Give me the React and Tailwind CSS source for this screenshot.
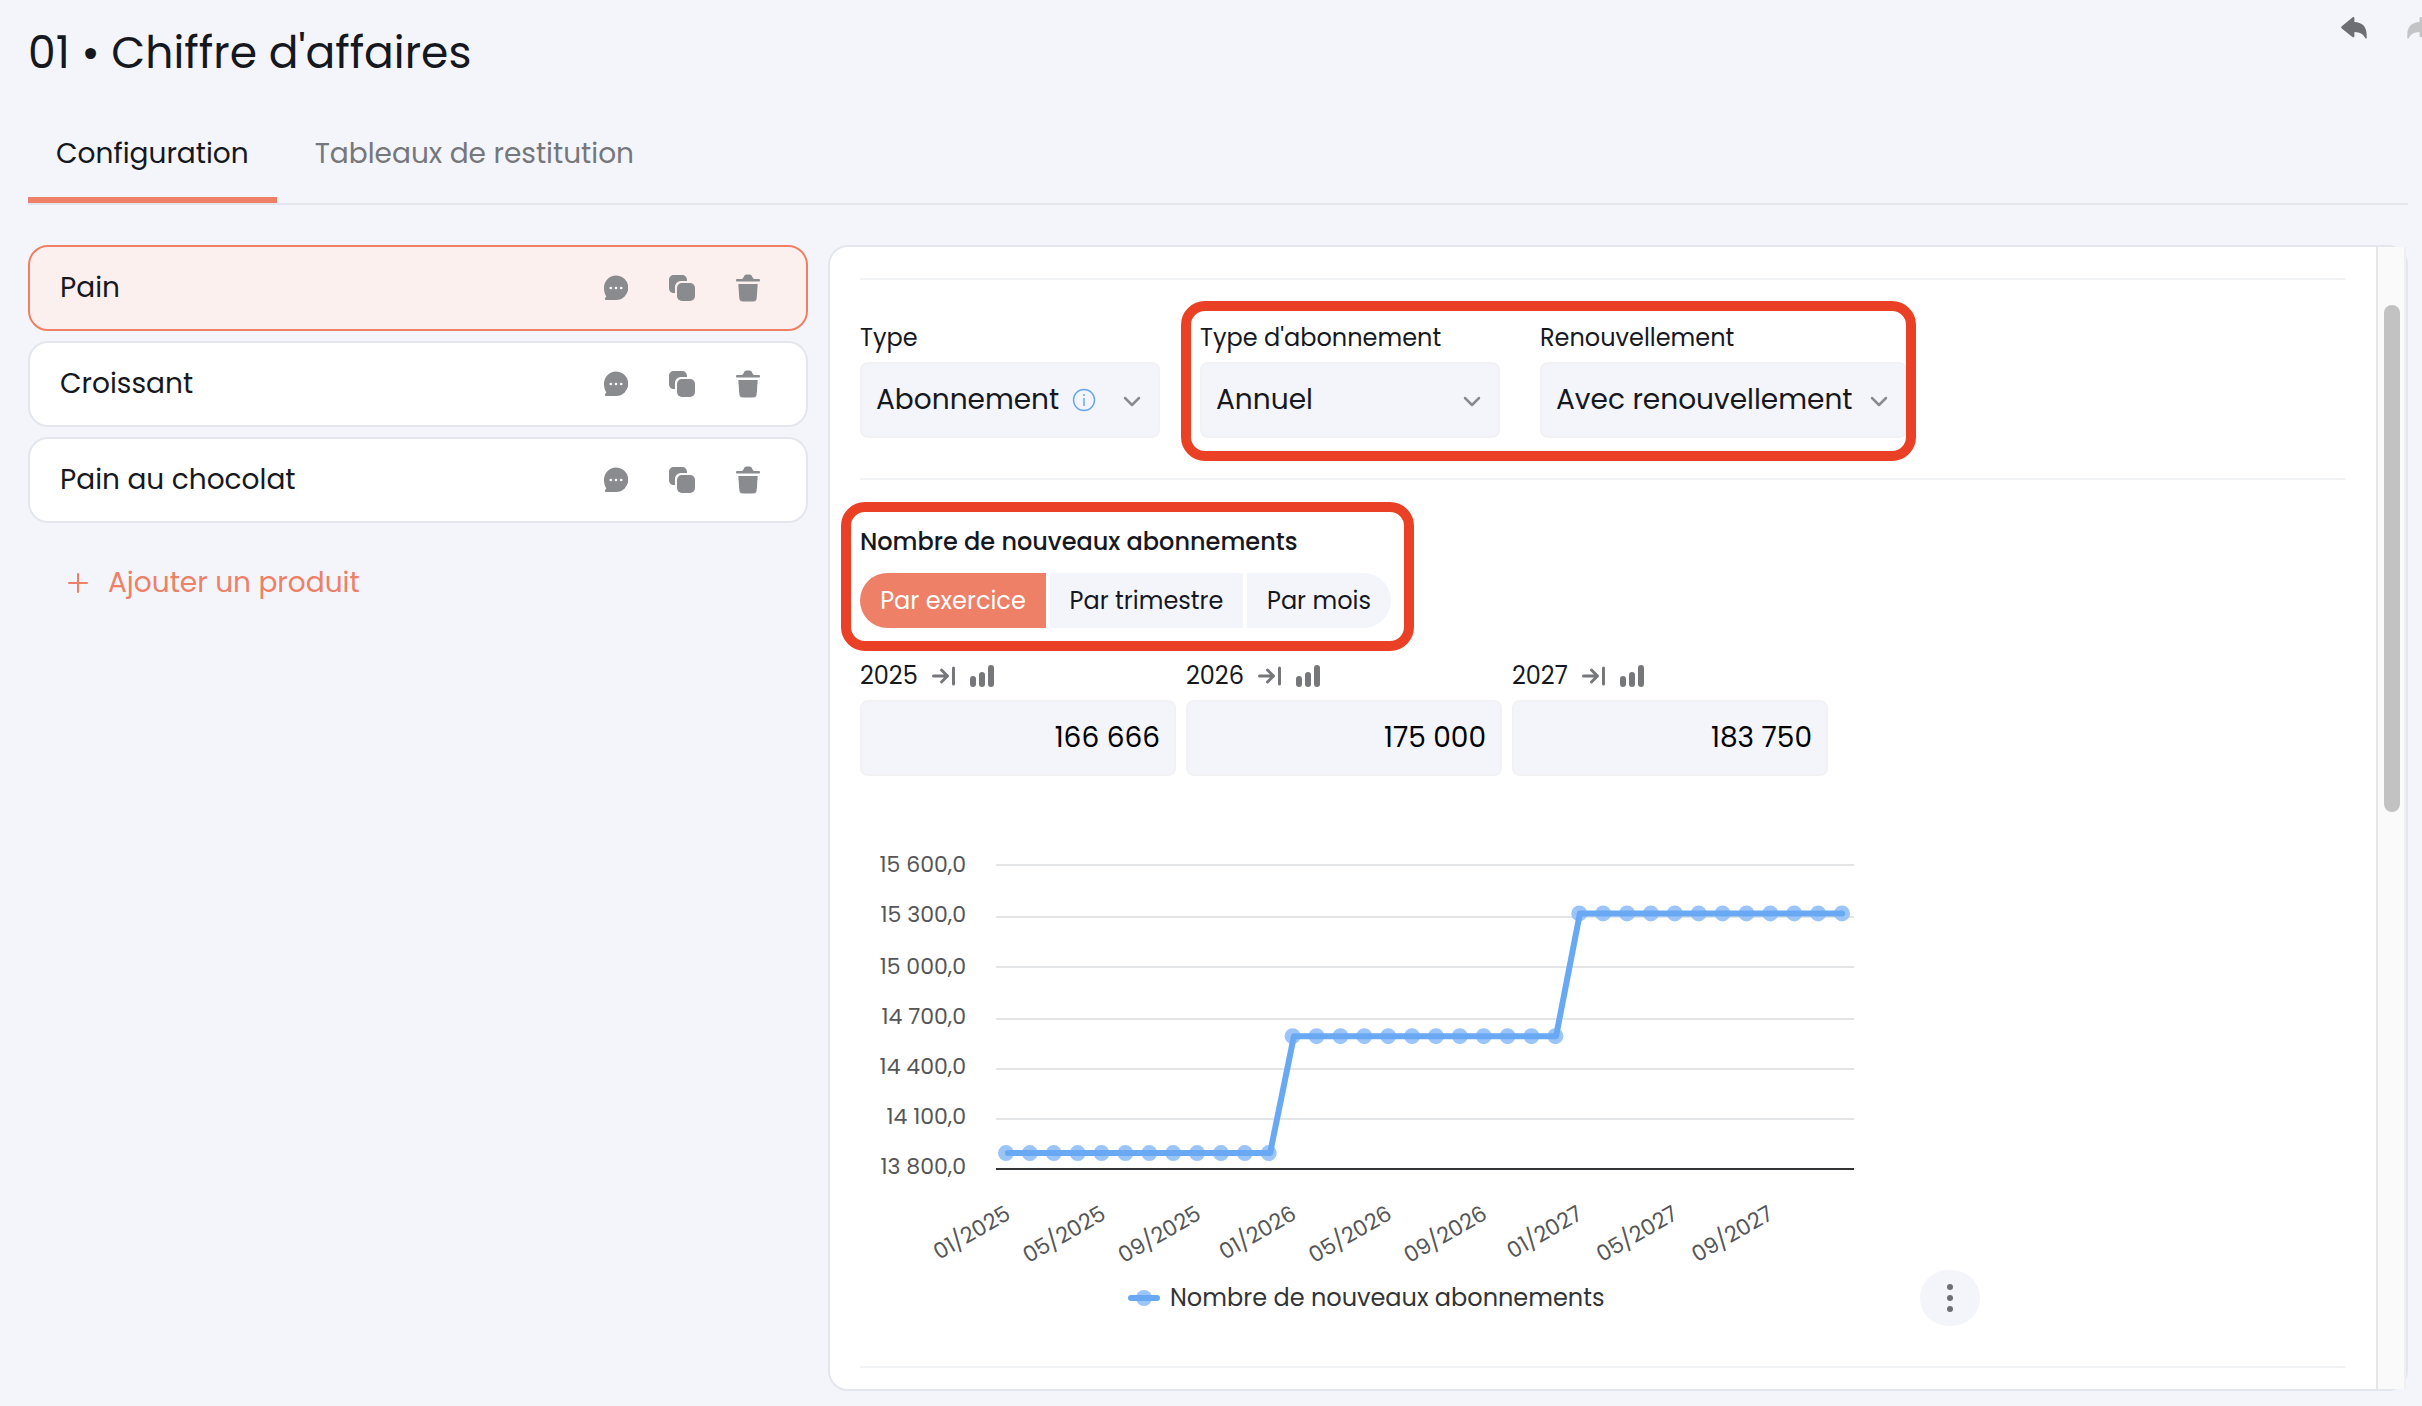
import React, { useState } from 'react';

const products = ['Pain', 'Croissant', 'Pain au chocolat'];

const tabs = [
    { id: 'config', label: 'Configuration' },
    { id: 'tables', label: 'Tableaux de restitution' },
];

const periods = [
    { id: 'year', label: 'Par exercice', className: 'w-[186px] rounded-l-full' },
    { id: 'quarter', label: 'Par trimestre', className: 'w-[193px]' },
    { id: 'month', label: 'Par mois', className: 'w-[144px] rounded-r-full' },
];

const initialValues = { 2025: '166 666', 2026: '175 000', 2027: '183 750' };

/* Icons */

const UndoIcon = ({ className }) => (
    <svg className={className} width="26" height="22" viewBox="0 0 26 22" fill="currentColor" aria-hidden="true">
        <path d="M11.4.4c.9-.7 2-.3 2 .8v3.9c7.600.2 12.300 4.300 12.300 13.200v2.700c0 .8-.9 1-1.300.3-1.900-4.200-5.200-6.300-11-6.400v4.300c0 1.100-1.100 1.500-2 .8L.8 11.600c-.8-.7-.8-1.600 0-2.300z" />
    </svg>
);

const CommentIcon = () => (
    <svg width="24" height="26" viewBox="0 0 24 26" fill="none" aria-hidden="true">
        <path fill="currentColor" d="M12 .5a12 12 0 0 1 0 24.500H2.200c-1.300 0-1.700-1.400-.9-2.300l1-1.200C.8 19.200 0 16.500 0 12.800A12.100 12.100 0 0 1 12 .5z" />
        <circle cx="6.800" cy="13" r="1.300" fill="#fff" />
        <circle cx="12" cy="13" r="1.300" fill="#fff" />
        <circle cx="17.200" cy="13" r="1.300" fill="#fff" />
    </svg>
);

const CopyIcon = () => (
    <svg width="26" height="26" viewBox="0 0 26 26" fill="currentColor" aria-hidden="true">
        <path d="M5 0h8c2.800 0 5 2 5 5v1h-5.500C8.500 6 6 8.500 6 12.500V18H5c-3 0-5-2-5-5V5c0-3 2-5 5-5z" />
        <rect x="8" y="8" width="18" height="18" rx="5" />
    </svg>
);

const TrashIcon = () => (
    <svg width="24" height="28" viewBox="0 0 24 28" fill="currentColor" aria-hidden="true">
        <path d="M1 5h4.500c1.200 0 1.500-.6 2-1.700C8.300 1.400 9 .5 10.500.5h3c1.500 0 2.200.9 3 2.800.5 1.100.8 1.700 2 1.700H23a1 1 0 0 1 1 1v.5a1 1 0 0 1-1 1H1a1 1 0 0 1-1-1V6a1 1 0 0 1 1-1z" />
        <path d="M2.300 10h19.400l-1 14c-.2 2.500-1.400 3.500-3.700 3.500H7c-2.300 0-3.500-1-3.700-3.500z" />
    </svg>
);

const PlusIcon = () => (
    <svg width="20" height="20" viewBox="0 0 20 20" stroke="currentColor" strokeWidth="2" strokeLinecap="round" aria-hidden="true">
        <path d="M10 1v18M1 10h18" />
    </svg>
);

const ChevronIcon = ({ className }) => (
    <svg className={className} width="18" height="12" viewBox="0 0 18 12" fill="none" stroke="currentColor" strokeWidth="2.500" strokeLinecap="round" strokeLinejoin="round" aria-hidden="true">
        <path d="M2 2l7 7 7-7" />
    </svg>
);

const InfoIcon = ({ className }) => (
    <svg className={className} width="24" height="24" viewBox="0 0 24 24" fill="none" stroke="currentColor" aria-hidden="true">
        <circle cx="12" cy="12" r="10.500" strokeWidth="1.500" />
        <path d="M12 10v8" strokeWidth="1.500" />
        <circle cx="12" cy="7" r="1" fill="currentColor" stroke="none" />
    </svg>
);

const ArrowToRightIcon = () => (
    <svg width="24" height="20" viewBox="0 0 24 20" fill="none" stroke="currentColor" strokeWidth="3" strokeLinecap="round" strokeLinejoin="round" aria-hidden="true">
        <path d="M1.500 10h14M9.500 4l6 6-6 6" />
        <path d="M21.500 2v16" />
    </svg>
);

const BarsIcon = () => (
    <svg width="24" height="24" viewBox="0 0 24 24" fill="currentColor" aria-hidden="true">
        <rect x="0" y="12" width="6" height="11" rx="3" />
        <rect x="9" y="8" width="6" height="15" rx="3" />
        <rect x="18" y="1" width="6" height="22" rx="3" />
    </svg>
);

/* Layout pieces */

const Separator = ({ className = '' }) => <hr className={`border-0 h-[2px] bg-[#f2f3f4] ${className}`} />;

const Highlight = ({ className }) => (
    <div className={`absolute border-10 border-[#ea4025] rounded-3xl pointer-events-none ${className}`}></div>
);

const ProductRow = ({ name, active, onSelect }) => (
    <li
        className={`flex items-center h-[86px] pl-[30px] pr-[46px] border-2 rounded-[20px] ${active ? 'bg-[#fcf0ee] border-[#ed8066]' : 'bg-white border-[#e3e6ed]'}`}
    >
        <button type="button" onClick={onSelect} className="flex-1 text-left cursor-pointer">{name}</button>
        <div className="flex items-center gap-[41px] text-[#8a8b8e]">
            <button type="button" aria-label="Commenter" className="cursor-pointer"><CommentIcon /></button>
            <button type="button" aria-label="Dupliquer" className="cursor-pointer"><CopyIcon /></button>
            <button type="button" aria-label="Supprimer" className="cursor-pointer"><TrashIcon /></button>
        </div>
    </li>
);

const SelectField = ({ id, label, options, info, className }) => (
    <div className={className}>
        <label htmlFor={id} className="block text-2xl leading-9">{label}</label>
        <div className="relative mt-[6px]">
            <select id={id} className="appearance-none w-full h-[76px] pl-[14px] border-2 border-[#f2f2f5] rounded-lg bg-[#f4f5fa] text-[28px]">
                {options.map((option) => <option key={option}>{option}</option>)}
            </select>
            {info && <InfoIcon className="absolute left-[212px] top-[26px] text-[#69a9f4]" />}
            <ChevronIcon className="absolute right-[19px] top-[34px] text-[#8a8b8e] pointer-events-none" />
        </div>
    </div>
);

const YearField = ({ year, value, onChange }) => (
    <div className="w-[316px]">
        <div className="flex items-center gap-[14px] h-9 text-[#76777b]">
            <label htmlFor={`year-${year}`} className="text-2xl leading-9 text-[#16181f]">{year}</label>
            <button type="button" aria-label="Recopier à droite" className="cursor-pointer"><ArrowToRightIcon /></button>
            <button type="button" aria-label="Croissance" className="cursor-pointer"><BarsIcon /></button>
        </div>
        <input
            id={`year-${year}`}
            value={value}
            onChange={(e) => onChange(e.target.value)}
            className="mt-[6px] w-full h-[76px] px-[14px] border-2 border-[#f2f2f5] rounded-lg bg-[#f4f5fa] text-[28px] text-black text-right"
        />
    </div>
);

/* Chart */

const plot = { left: 136, right: 994, top: 25, bottom: 328 };
const axis = { min: 13800, max: 15600 };
const monthly = [166666 / 12, 175000 / 12, 183750 / 12];

const ticks = [
    { label: '15 600,0', line: 25, text: 32 },
    { label: '15 300,0', line: 77, text: 82 },
    { label: '15 000,0', line: 127, text: 134 },
    { label: '14 700,0', line: 179, text: 184 },
    { label: '14 400,0', line: 229, text: 234 },
    { label: '14 100,0', line: 279, text: 284 },
    { label: '13 800,0', line: 329, text: 334 },
];

const toY = (v) => plot.bottom - ((v - axis.min) / (axis.max - axis.min)) * (plot.bottom - plot.top);

const LineChart = () => {
    const slot = (plot.right - plot.left) / 36;
    const points = Array.from({ length: 36 }, (_, i) => ({
        x: plot.left + slot * (i + 0.5),
        markerX: 146 + (836 / 35) * i,
        y: toY(monthly[Math.floor(i / 12)]),
        label: `${String((i % 12) + 1).padStart(2, '0')}/${2025 + Math.floor(i / 12)}`,
    }));

    return (
        <svg width="1040" height="486" viewBox="0 0 1040 486" role="img" aria-label="Nombre de nouveaux abonnements">
            {ticks.map(({ label, line, text }, i) => (
                <g key={label}>
                    <line
                        x1={plot.left}
                        x2={plot.right}
                        y1={line}
                        y2={line}
                        stroke={i === ticks.length - 1 ? '#333436' : '#e4e5e6'}
                        strokeWidth="2"
                    />
                    <text x="106" y={text} textAnchor="end" fontSize="22" fill="#555658">{label}</text>
                </g>
            ))}
            {points.map((p) => <circle key={p.label} cx={p.markerX} cy={p.y} r="8" fill="#9bc5f8" />)}
            <polyline
                points={points.map((p) => `${p.x},${p.y}`).join(' ')}
                fill="none"
                stroke="#69a9f4"
                strokeWidth="6"
                strokeLinecap="round"
                strokeLinejoin="round"
            />
            {points.filter((_, i) => i % 4 === 0).map((p) => (
                <text key={p.label} transform={`translate(${p.x + 4} 378) rotate(-30)`} textAnchor="end" fontSize="22" fill="#555658">
                    {p.label}
                </text>
            ))}
            <circle cx="284" cy="458" r="8" fill="#9bc5f8" />
            <line x1="271" x2="297" y1="458" y2="458" stroke="#69a9f4" strokeWidth="6" strokeLinecap="round" />
            <text x="310" y="466" fontSize="24" fill="#333436">Nombre de nouveaux abonnements</text>
        </svg>
    );
};

const App = () => {
    const [tab, setTab] = useState('config');
    const [selected, setSelected] = useState('Pain');
    const [period, setPeriod] = useState('year');
    const [values, setValues] = useState(initialValues);

    return (
        <div className="flex flex-col min-h-screen overflow-x-hidden bg-[#f4f5fa] text-[#16181f] text-[28px] font-['Poppins','Inter',sans-serif]">
            <header className="flex justify-between items-start pl-7 pt-[17px]">
                <h1 className="text-[44px] leading-[72px]">01 • Chiffre d'affaires</h1>
                <div className="flex gap-10 -mr-[11px]">
                    <button type="button" aria-label="Annuler" className="cursor-pointer"><UndoIcon className="text-[#6d6f74]" /></button>
                    <button type="button" aria-label="Rétablir" disabled><UndoIcon className="text-[#c3c4c6] -scale-x-100" /></button>
                </div>
            </header>

            <nav className="flex gap-[10px] mt-[29px] ml-7 mr-[14px] border-b-2 border-[#e3e6ed]" role="tablist">
                {tabs.map(({ id, label }) => (
                    <button
                        key={id}
                        type="button"
                        role="tab"
                        aria-selected={tab === id}
                        onClick={() => setTab(id)}
                        className={`h-[85px] px-7 pb-2 border-b-6 cursor-pointer ${tab === id ? 'border-[#ed8066]' : 'border-transparent text-[#76777b]'}`}
                    >
                        {label}
                    </button>
                ))}
            </nav>

            <main className="flex-1 grid grid-cols-[780fr_1580fr] gap-5 mt-10 ml-7 mr-[14px] mb-[15px]">
                <aside>
                    <ul className="flex flex-col gap-[10px]">
                        {products.map((name) => (
                            <ProductRow key={name} name={name} active={name === selected} onSelect={() => setSelected(name)} />
                        ))}
                    </ul>
                    <button type="button" className="flex items-center gap-5 mt-[39px] ml-10 text-[#ed8066] cursor-pointer">
                        <PlusIcon />
                        Ajouter un produit
                    </button>
                </aside>

                <section className="flex border-2 border-[#e3e6ed] rounded-[20px] bg-white">
                    <div className="flex-1 pl-[30px] pr-[30px] pt-[31px] pb-[21px]">
                        <Separator />
                        <div className="flex gap-10 mt-10">
                            <SelectField id="type" label="Type" options={['Abonnement']} info className="w-[300px]" />
                            <div className="relative flex gap-10">
                                <SelectField id="subscription" label="Type d'abonnement" options={['Annuel', 'Mensuel']} className="w-[300px]" />
                                <SelectField id="renewal" label="Renouvellement" options={['Avec renouvellement', 'Sans renouvellement']} className="w-[367px]" />
                                <Highlight className="-top-[19px] -bottom-[23px] -left-[19px] -right-[9px]" />
                            </div>
                        </div>

                        <Separator className="mt-10" />
                        <div className="relative w-fit mt-11">
                            <h2 className="text-2xl leading-9 font-medium">Nombre de nouveaux abonnements</h2>
                            <div className="flex gap-1 mt-[13px]">
                                {periods.map(({ id, label, className }) => (
                                    <button
                                        key={id}
                                        type="button"
                                        aria-pressed={period === id}
                                        onClick={() => setPeriod(id)}
                                        className={`h-[55px] text-2xl cursor-pointer ${className} ${period === id ? 'bg-[#ed8066] text-white' : 'bg-[#f4f5fa]'}`}
                                    >
                                        {label}
                                    </button>
                                ))}
                            </div>
                            <Highlight className="-top-[22px] -bottom-[23px] -left-[19px] -right-[23px]" />
                        </div>

                        <div className="flex gap-[10px] mt-[30px]">
                            {Object.keys(values).map((year) => (
                                <YearField key={year} year={year} value={values[year]} onChange={(v) => setValues({ ...values, [year]: v })} />
                            ))}
                        </div>

                        <div className="flex items-end gap-5 mt-16">
                            <LineChart />
                            <button type="button" aria-label="Plus d'options" className="flex flex-col items-center justify-center gap-[5px] w-[60px] h-14 rounded-full bg-[#f4f5fa] cursor-pointer">
                                <span className="size-[6px] rounded-full bg-[#6d6f74]"></span>
                                <span className="size-[6px] rounded-full bg-[#6d6f74]"></span>
                                <span className="size-[6px] rounded-full bg-[#6d6f74]"></span>
                            </button>
                        </div>
                        <Separator className="mt-10" />
                    </div>
                    {/* scrollbar */}
                    <div className="w-[30px] pt-[58px] pl-[6px] border-l-2 border-r-2 border-l-[#e6e6e6] border-r-[#eeeff0] bg-[#fafafa]">
                        <div className="w-4 h-[507px] rounded-full bg-[#c2c2c2]"></div>
                    </div>
                </section>
            </main>
        </div>
    );
};

export default App;
